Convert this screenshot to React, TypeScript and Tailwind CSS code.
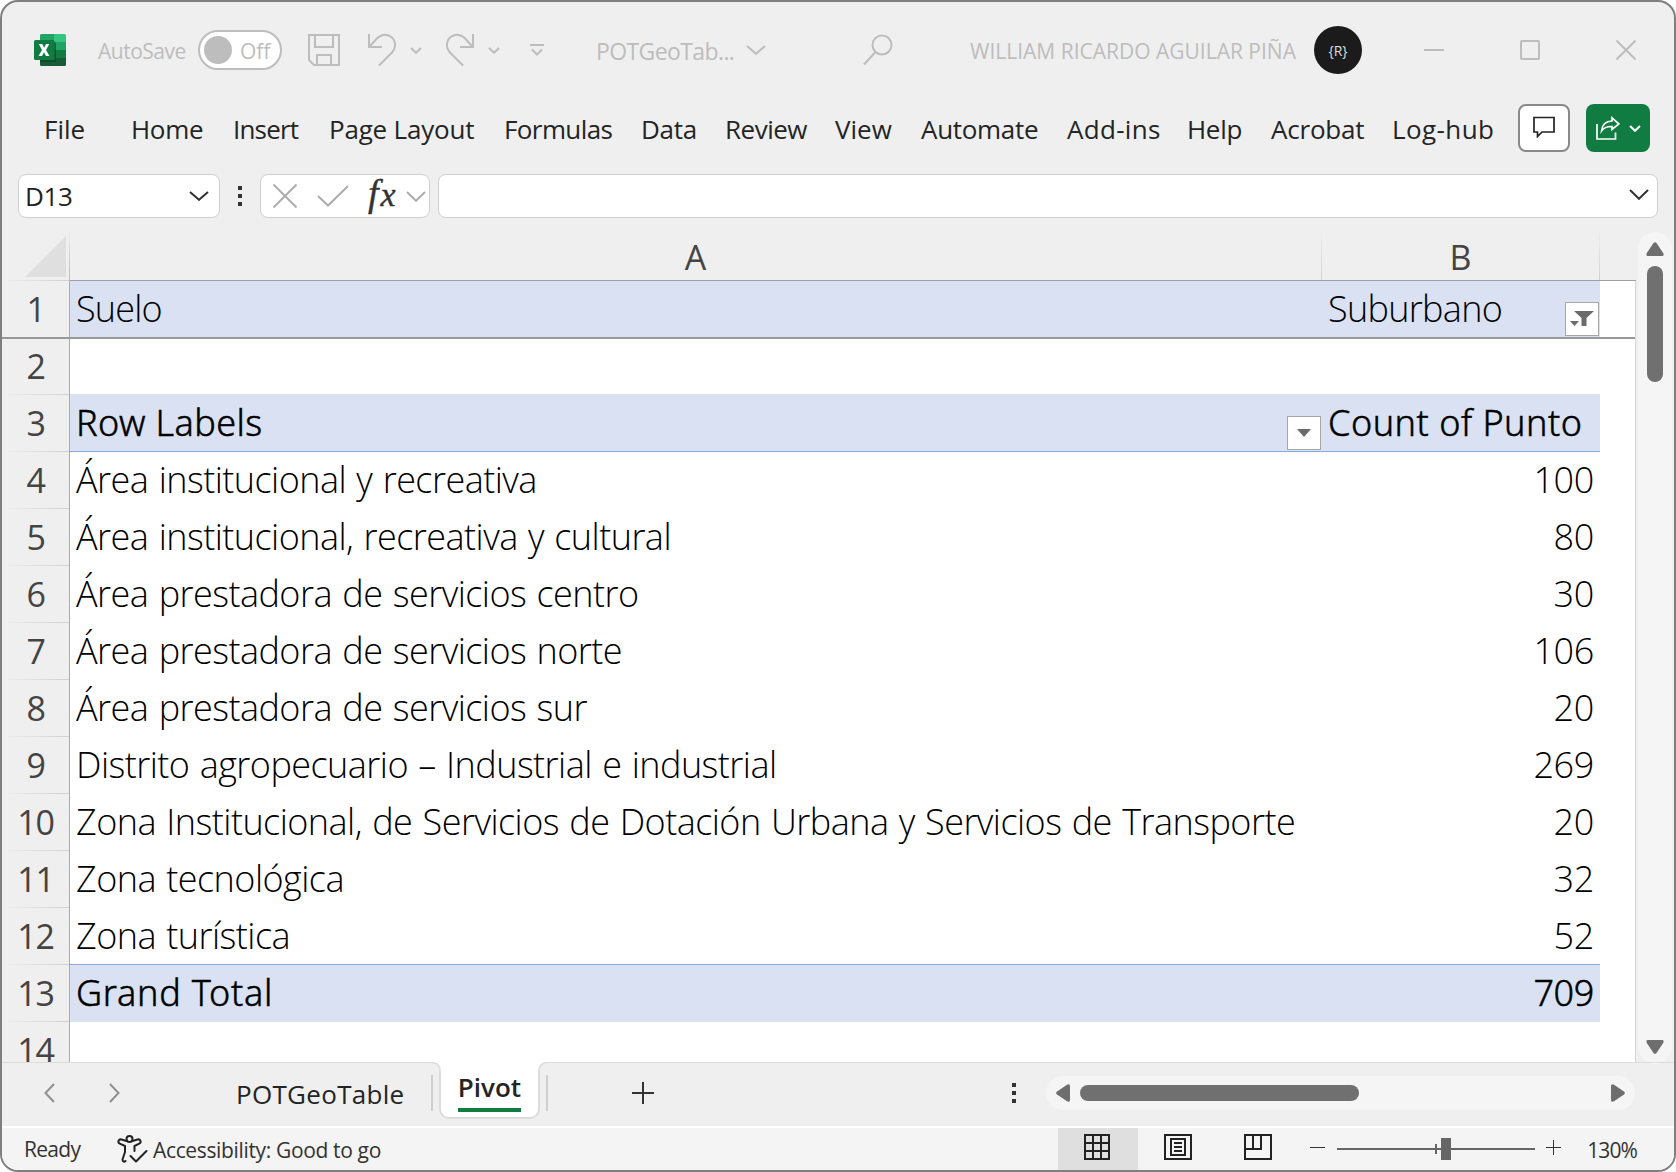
import type { ReactNode } from 'react';

type Row = { n: number; a?: string; b?: string; kind: 'filter' | 'head' | 'data' | 'total' | 'empty' };

const rows: Row[] = [
  { n: 1, a: 'Suelo', b: 'Suburbano', kind: 'filter' },
  { n: 2, kind: 'empty' },
  { n: 3, a: 'Row Labels', b: 'Count of Punto', kind: 'head' },
  { n: 4, a: 'Área institucional y recreativa', b: '100', kind: 'data' },
  { n: 5, a: 'Área institucional, recreativa y cultural', b: '80', kind: 'data' },
  { n: 6, a: 'Área prestadora de servicios centro', b: '30', kind: 'data' },
  { n: 7, a: 'Área prestadora de servicios norte', b: '106', kind: 'data' },
  { n: 8, a: 'Área prestadora de servicios sur', b: '20', kind: 'data' },
  { n: 9, a: 'Distrito agropecuario – Industrial e industrial', b: '269', kind: 'data' },
  { n: 10, a: 'Zona Institucional, de Servicios de Dotación Urbana y Servicios de Transporte', b: '20', kind: 'data' },
  { n: 11, a: 'Zona tecnológica', b: '32', kind: 'data' },
  { n: 12, a: 'Zona turística', b: '52', kind: 'data' },
  { n: 13, a: 'Grand Total', b: '709', kind: 'total' },
  { n: 14, kind: 'empty' },
];

const tabs: [string, string][] = [
  ['File', 'w-[87px]'],
  ['Home', 'w-[102px] tracking-[-0.3px]'],
  ['Insert', 'w-[96px] tracking-[-0.8px]'],
  ['Page Layout', 'w-[175px] tracking-[-0.2px]'],
  ['Formulas', 'w-[137px] tracking-[-0.6px]'],
  ['Data', 'w-[84px] tracking-[-0.3px]'],
  ['Review', 'w-[110px] tracking-[-0.5px]'],
  ['View', 'w-[86px]'],
  ['Automate', 'w-[146px] tracking-[-0.3px]'],
  ['Add-ins', 'w-[120px] tracking-[0.3px]'],
  ['Help', 'w-[84px] tracking-[-0.3px]'],
  ['Acrobat', 'w-[121px] tracking-[-0.2px]'],
  ['Log-hub', 'w-[126px] tracking-[0.4px]'],
];

function Chevron({ className, w = 20, h = 10, sw = 2 }: { className?: string; w?: number; h?: number; sw?: number }) {
  return (
    <svg width={w} height={h} viewBox={`0 0 ${w} ${h}`} className={className} fill="none" stroke="currentColor" strokeWidth={sw}>
      <path d={`M1 1L${w / 2} ${h - 1.2}L${w - 1} 1`} />
    </svg>
  );
}

function Dots() {
  return (
    <div className="flex flex-col gap-1">
      <i className="size-1 bg-[#333]" />
      <i className="size-1 bg-[#333]" />
      <i className="size-1 bg-[#333]" />
    </div>
  );
}

function ExcelLogo() {
  return (
    <svg width="32" height="32" viewBox="0 0 32 32">
      <path d="M7.500 0H20V8H6V1.500Q6 0 7.500 0Z" fill="#21a366" />
      <path d="M20 0H30.500Q32 0 32 1.500V8H20Z" fill="#33c481" />
      <path d="M6 8H20V16H6Z" fill="#107c41" />
      <path d="M20 8H32V16H20Z" fill="#21a366" />
      <path d="M20 16H32V24H20Z" fill="#107c41" />
      <path d="M6 16H20V24H32V30.500Q32 32 30.500 32H7.500Q6 32 6 30.500Z" fill="#185c37" />
      <path d="M6 8H20.500Q22 8 22 9.500V26.500Q22 28 20.500 28H6Z" fill="#0b4225" opacity=".65" />
      <rect y="6" width="20.500" height="20" rx="1.500" fill="#107c41" />
      <path d="M4.800 10H8.300L10.100 13.700L12 10H15.300L12 16L15.500 22H12L10 18.200L8 22H4.500L8 16Z" fill="#fff" />
    </svg>
  );
}

function TitleBar() {
  return (
    <div className="flex h-[96px] items-center pl-8 text-[#bdbdbd]">
      <ExcelLogo />
      <span className="ml-8 w-[100px] pt-1 text-[21px] tracking-[-0.5px]">AutoSave</span>
      <div className="flex h-10 w-[84px] items-center rounded-full border-2 border-[#bdbdbd] bg-white pl-1">
        <span className="size-7 rounded-full bg-[#bdbdbd]" />
        <span className="ml-2 pt-1 text-[21px]">Off</span>
      </div>
      <svg className="ml-[26px]" width="32" height="32" viewBox="0 0 32 32" fill="none" stroke="currentColor" strokeWidth="2">
        <path d="M1 1H31V31H6L1 26ZM7 1V13H25V1M9 31V21H23V31" />
      </svg>
      <svg className="ml-7" width="30" height="34" viewBox="0 0 30 34" fill="none" stroke="currentColor" strokeWidth="2">
        <path d="M1 1V14H14M1.500 13.500L8 6.500C12 1.500 18 .500 22.500 3.500C28 7 28.500 14.500 24 19.500L11 32.500" />
      </svg>
      <Chevron className="ml-3" w={12} h={7} />
      <svg className="ml-[22px]" width="30" height="34" viewBox="0 0 30 34" fill="none" stroke="currentColor" strokeWidth="2">
        <path d="M29 1V14H16M28.500 13.500L22 6.500C18 1.500 12 .500 7.500 3.500C2 7 1.500 14.500 6 19.500L19 32.500" />
      </svg>
      <Chevron className="ml-3.5" w={12} h={7} />
      <svg className="ml-[30px]" width="14" height="12" viewBox="0 0 14 12" fill="none" stroke="currentColor" strokeWidth="2">
        <path d="M0 1H14M2 5.500L7 10.500L12 5.500" />
      </svg>
      <span className="ml-[52px] w-[150px] pt-0.5 text-[23px] tracking-[-0.6px]">POTGeoTab...</span>
      <Chevron />
      <svg className="ml-[97px]" width="30" height="32" viewBox="0 0 30 32" fill="none" stroke="currentColor" strokeWidth="2">
        <circle cx="19" cy="11" r="9.500" />
        <path d="M12.500 18L1 30.500" />
      </svg>
      <span className="ml-[77px] w-[344px] pt-1 text-[21px] whitespace-nowrap">WILLIAM RICARDO AGUILAR PIÑA</span>
      <span className="flex size-12 items-center justify-center rounded-full bg-[#1b1b1b] text-[14px] text-[#ddd]">{'{R}'}</span>
      <i className="ml-[62px] h-0.5 w-5 bg-[#bdbdbd]" />
      <i className="ml-[76px] size-5 rounded-[2px] border-2 border-[#bdbdbd]" />
      <svg className="ml-[76px]" width="20" height="20" viewBox="0 0 20 20" fill="none" stroke="currentColor" strokeWidth="2">
        <path d="M.500 .500L19.500 19.500M19.500 .500L.500 19.500" />
      </svg>
    </div>
  );
}

function MenuBar() {
  return (
    <div className="flex h-[60px] items-center pl-[42px] text-[26px] text-[#242424]">
      {tabs.map(([label, cls]) => (
        <span key={label} className={`${cls} shrink-0 pt-[3px] whitespace-nowrap`}>{label}</span>
      ))}
      <button className="flex h-12 w-[52px] shrink-0 items-center justify-center rounded-lg border-2 border-[#8a8a8a] bg-white">
        <svg className="-mt-0.5" width="22" height="22" viewBox="0 0 22 22" fill="none" stroke="#222" strokeWidth="1.700">
          <path d="M1 1.500H21V16H9L4.500 20.500V16H1Z" />
        </svg>
      </button>
      <button className="ml-4 flex h-12 w-16 shrink-0 items-center rounded-lg bg-[#107c41] pl-2.5 text-white">
        <svg width="24" height="24" viewBox="0 0 24 24" fill="none" stroke="currentColor" strokeWidth="1.700">
          <path d="M1 8V23H19.500V16.500M16 1.800L22.800 7.800L16 13.500V10.500C11 10.300 8 11.500 5.500 15C6 9 9.500 5.300 16 5Z" />
        </svg>
        <Chevron className="ml-[9px]" w={12} h={7} />
      </button>
    </div>
  );
}

function FormulaBar() {
  return (
    <div className="flex h-[70px] items-start px-4 pt-4">
      <div className="flex h-11 w-[202px] items-center justify-between rounded-lg border border-[#d0d0d0] bg-white pr-2.5 pl-1.5 text-[26px] tracking-[-0.4px] text-[#222]">
        D13
        <Chevron className="text-[#333]" />
      </div>
      <div className="flex h-11 w-10 items-center justify-center"><Dots /></div>
      <div className="flex h-11 w-[170px] items-center rounded-lg border border-[#d0d0d0] bg-white pl-3 text-[#adadad]">
        <svg width="24" height="24" viewBox="0 0 24 24" fill="none" stroke="currentColor" strokeWidth="2"><path d="M.500 .500L23.500 23.500M23.500 .500L.500 23.500" /></svg>
        <svg className="ml-5" width="32" height="22" viewBox="0 0 32 22" fill="none" stroke="currentColor" strokeWidth="2"><path d="M1 11L11 20.500L31 1" /></svg>
        <span className="-mt-1 ml-[19px] w-[38px] font-['Liberation_Serif'] text-[38px] leading-10 text-[#333] italic [-webkit-text-stroke:0.4px_#333]">
          f<span className="ml-0.5 text-[34px]">x</span>
        </span>
        <Chevron className="shrink-0" w={20} h={11} />
      </div>
      <div className="ml-2 flex h-11 flex-1 items-center justify-end rounded-lg border border-[#d0d0d0] bg-white pr-2">
        <Chevron className="-mt-1 text-[#333]" w={20} h={11} />
      </div>
    </div>
  );
}

function FilterButton({ children }: { children: ReactNode }) {
  return <span className="absolute right-px bottom-px flex size-[34px] items-center justify-center border border-[#a6a6a6] bg-white">{children}</span>;
}

function GridRow({ row }: { row: Row }) {
  const { n, a, b, kind } = row;
  const strong = kind === 'head' || kind === 'total';
  const fill = strong || kind === 'filter' ? 'bg-[#d9e1f2]' : '';
  const line = kind === 'head' || n === 12 ? 'border-b border-[#8ea9db]' : '';
  const freeze = n === 1 ? 'border-b border-[#999]' : n === 2 ? 'border-t border-[#999]' : '';
  const raise = kind === 'head' ? '-mt-px pt-px' : '';
  const font = strong
    ? "font-['Noto_Sans'] font-light [-webkit-text-stroke:0.5px_black]"
    : "font-['Open_Sans'] font-light [word-spacing:1.5px]";
  const spaceA = kind === 'head' ? 'tracking-[0.4px]' : kind === 'total' ? 'tracking-[0.75px]' : kind === 'filter' ? 'tracking-[-0.8px]' : 'tracking-[-0.54px]';
  const spaceB = kind === 'head' ? 'tracking-[0.5px]' : kind === 'filter' ? 'tracking-[-0.7px]' : 'tracking-[-0.35px]';
  return (
    <div className={`flex h-[57px] shrink-0 text-black ${freeze}`}>
      <div className="flex w-[68px] flex-col border-r border-[#ababab] text-center text-[34px] leading-[56px] tracking-[-1.2px] text-[#444]">
        <div className={`h-14 ${n === 2 ? '-mt-px' : ''}`}>{n}</div>
        {n > 1 && <div className="h-px bg-linear-to-r from-[#efefef] to-[#d0d0d0]" />}
      </div>
      <div className="flex flex-1 bg-white">
        <div className={`relative w-[1252px] pl-1.5 text-[36px] leading-[56px] whitespace-nowrap ${fill} ${line} ${font} ${spaceA} ${raise}`}>
          {a}
          {kind === 'head' && (
            <FilterButton>
              <svg width="14" height="8" viewBox="0 0 14 8" className="fill-[#6b6b6b]"><path d="M0 0H14L7 8Z" /></svg>
            </FilterButton>
          )}
        </div>
        <div className={`relative w-[278px] pr-1.5 pl-1.5 text-[36px] leading-[56px] whitespace-nowrap ${fill} ${line} ${font} ${spaceB} ${raise} ${kind === 'data' || kind === 'total' ? 'text-right' : ''}`}>
          {b}
          {kind === 'filter' && (
            <FilterButton>
              <svg width="24" height="16" viewBox="0 0 24 16" className="fill-[#6b6b6b]"><path d="M4 0H24L16.500 7V15H11.500V7ZM0 10H9L4.500 15Z" /></svg>
            </FilterButton>
          )}
        </div>
      </div>
    </div>
  );
}

function ColumnHeader() {
  return (
    <div className="flex h-[53px] shrink-0 text-center text-[34px] leading-[58px] text-[#444]">
      <div className="flex w-[67px] flex-col items-end justify-end">
        <svg className="mr-[3px] mb-[3px]" width="41" height="41" viewBox="0 0 41 41"><path d="M41 0V41H0Z" fill="#dfdfdf" /></svg>
        <div className="h-px w-full bg-linear-to-r from-[#efefef] to-[#d0d0d0]" />
      </div>
      <i className="w-px bg-linear-to-b from-[#efefef] to-[#b8b8b8]" />
      <div className="w-[1251px] border-b border-[#a0a0a0]">A</div>
      <i className="w-px border-b border-[#a0a0a0] bg-linear-to-b from-[#efefef] to-[#d0d0d0]" />
      <div className="w-[277px] border-b border-[#a0a0a0]">B</div>
      <i className="w-px border-b border-[#a0a0a0] bg-linear-to-b from-[#efefef] to-[#d0d0d0]" />
      <div className="flex-1 border-b border-[#a0a0a0]" />
    </div>
  );
}

function Tri({ className }: { className?: string }) {
  return (
    <svg width="18" height="14" viewBox="0 0 18 14" className={`fill-[#6e6e6e] ${className ?? ''}`}>
      <path d="M7.500 1Q9 -.700 10.500 1L17.200 11Q18.500 14 16 14H2Q-.500 14 .800 11Z" />
    </svg>
  );
}

function TabCorner({ className }: { className: string }) {
  return (
    <svg width="10" height="9" viewBox="0 0 10 9" fill="none" className={`absolute top-0 ${className}`}>
      <path d="M0 0H10V9H9Q9 .500 0 .500Z" fill="#fff" />
      <path d="M0 .500Q9 .500 9 9" stroke="#dcdcdc" strokeWidth="1.500" />
    </svg>
  );
}

function SheetBar() {
  return (
    <div className="flex h-16 items-start text-[26px] text-[#242424]">
      <div className="flex h-full w-[437px] items-center border-t border-[#dcdcdc] pb-1">
        <svg className="ml-[42px] text-[#909090]" width="11" height="20" viewBox="0 0 11 20" fill="none" stroke="currentColor" strokeWidth="2"><path d="M10 1L1.500 10L10 19" /></svg>
        <svg className="ml-[54px] text-[#909090]" width="11" height="20" viewBox="0 0 11 20" fill="none" stroke="currentColor" strokeWidth="2"><path d="M1 1L9.500 10L1 19" /></svg>
        <span className="ml-[116px] pt-1 tracking-[0.3px]">POTGeoTable</span>
        <i className="mr-1.5 ml-auto h-9 w-0.5 bg-[#cfcfcf]" />
      </div>
      <div className="relative flex h-[57px] w-[101px] flex-col items-center rounded-b-[10px] border-2 border-t-0 border-[#dcdcdc] bg-white pt-[5px]">
        <TabCorner className="-left-[10px]" />
        <TabCorner className="-right-[10px] -scale-x-100" />
        <span className="border-b-4 border-[#107c41] text-[26px] leading-[41px] font-semibold">Pivot</span>
      </div>
      <div className="flex h-full flex-1 items-center border-t border-[#dcdcdc] pb-1">
        <i className="ml-1.5 h-9 w-0.5 bg-[#cfcfcf]" />
        <svg className="ml-[84px]" width="22" height="22" viewBox="0 0 22 22" stroke="#333" strokeWidth="2"><path d="M0 11H22M11 0V22" /></svg>
        <div className="mr-[30px] ml-auto"><Dots /></div>
        <div className="mr-[39px] flex h-[34px] w-[589px] items-center rounded-full bg-[#f5f5f5]">
          <Tri className="ml-2 -rotate-90" />
          <i className="ml-2 h-4 w-[279px] rounded-full bg-[#707070]" />
          <Tri className="mr-2 ml-auto rotate-90" />
        </div>
      </div>
    </div>
  );
}

function StatusBar() {
  return (
    <div className="flex h-11 items-center border-t-2 border-white bg-[#f4f4f4] text-[21px] text-[#333]">
      <span className="ml-[22px] w-[93px] pt-0.5 tracking-[-0.7px]">Ready</span>
      <svg width="31" height="28" viewBox="0 0 31 28" fill="none" stroke="#222" strokeWidth="2" strokeLinecap="round" strokeLinejoin="round">
        <circle cx="12.500" cy="4" r="3" />
        <path d="M9.500 6L4.500 4.500C1.500 3.700 .200 7.500 2.800 8.700L8 11V17L5.500 24.500C5.500 27 7.500 27 8.500 26M15.500 6L20.500 4.500C23.500 3.700 24.800 7.500 22.200 8.700L17.500 11V16M13.500 21L19 26.500L29.500 16" />
      </svg>
      <span className="ml-[5px] pt-[3px] tracking-[-0.35px]">Accessibility: Good to go</span>
      <div className="ml-auto flex h-full w-20 items-center justify-center bg-[#dfdfdf]">
        <svg className="-mt-1 -ml-0.5" width="26" height="26" viewBox="0 0 26 26" fill="none" stroke="#222" strokeWidth="2"><path d="M1 1H25V25H1ZM1 9H25M1 17H25M9 1V25M17 1V25" /></svg>
      </div>
      <svg className="-mt-1 ml-[26px]" width="28" height="26" viewBox="0 0 28 26" fill="none" stroke="#222" strokeWidth="2"><path d="M1 1H27V25H1ZM7 5H21V21H7ZM10 9H18M10 13H18M10 17H18" /></svg>
      <svg className="-mt-1 ml-[52px]" width="28" height="26" viewBox="0 0 28 26" fill="none" stroke="#222" strokeWidth="2"><path d="M1 1H27V25H1ZM9 1V15H17V1M1 15H17" /></svg>
      <i className="-mt-1 ml-[38px] h-px w-[15px] bg-[#333]" />
      <svg className="-mt-px ml-3" width="198" height="22" viewBox="0 0 198 22" fill="#666"><path d="M0 10H198V12H0ZM98 6H100V16H98ZM104 0H114V22H104Z" /></svg>
      <svg className="-mt-1 ml-[11px]" width="15" height="15" viewBox="0 0 15 15" stroke="#333"><path d="M0 7.500H15M7.500 0V15" /></svg>
      <span className="mr-[37px] ml-[26px] pt-[3px] tracking-[-0.9px]">130%</span>
    </div>
  );
}

export default function App() {
  return (
    <div className="flex h-[1172px] w-[1676px] flex-col overflow-hidden rounded-[18px] border-2 border-[#7f7f7f] bg-[#efefef] font-['Open_Sans','Noto_Sans',sans-serif]">
      <TitleBar />
      <MenuBar />
      <FormulaBar />
      <div className="flex h-[834px]">
        <div className="flex w-[1634px] flex-col overflow-hidden">
          <ColumnHeader />
          <div className="flex h-[781px] flex-col overflow-hidden border-r border-[#d8d8d8]">
            {rows.map((row) => <GridRow key={row.n} row={row} />)}
          </div>
        </div>
        <div className="mt-1 ml-0.5 flex h-[832px] w-[34px] flex-col items-center rounded-full bg-[#f5f5f5] pt-[10px] pb-[10px]">
          <Tri />
          <i className="mt-2.5 h-[116px] w-4 rounded-full bg-[#707070]" />
          <Tri className="mt-auto rotate-180" />
        </div>
      </div>
      <SheetBar />
      <StatusBar />
    </div>
  );
}
